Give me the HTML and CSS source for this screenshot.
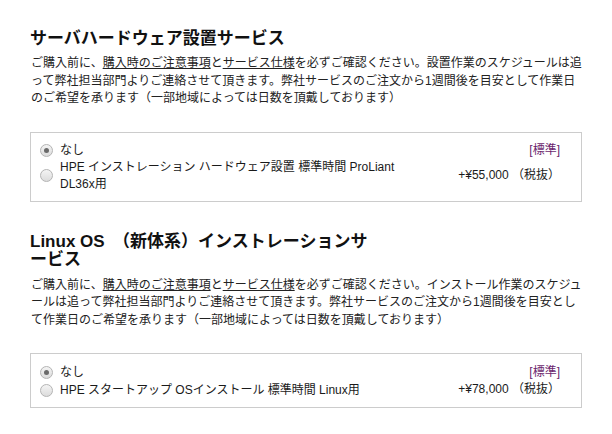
FILE: index.html
```html
<!DOCTYPE html>
<html lang="ja">
<head>
<meta charset="utf-8">
<link rel="stylesheet" href="styles.css">
</head>
<body>
<div class="page">
  <section class="service">
    <h2 class="title">サーバハードウェア設置サービス</h2>
    <p class="desc">ご購入前に、<a href="#">購入時のご注意事項</a>と<a href="#">サービス仕様</a>を必ずご確認ください。設置作業のスケジュールは追って弊社担当部門よりご連絡させて頂きます。弊社サービスのご注文から1週間後を目安として作業日のご希望を承ります（一部地域によっては日数を頂戴しております）</p>
    <div class="options">
      <div class="opt">
        <label class="lbl"><span class="radio checked"></span><span class="txt">なし</span></label>
        <span class="std">[標準]</span>
      </div>
      <div class="opt">
        <label class="lbl"><span class="radio"></span><span class="txt">HPE インストレーション ハードウェア設置 標準時間 ProLiant DL36x用</span></label>
        <span class="price">+¥55,000 （税抜）</span>
      </div>
    </div>
  </section>
  <section class="service second">
    <h2 class="title">Linux OS　（新体系）インストレーションサービス</h2>
    <p class="desc">ご購入前に、<a href="#">購入時のご注意事項</a>と<a href="#">サービス仕様</a>を必ずご確認ください。インストール作業のスケジュールは追って弊社担当部門よりご連絡させて頂きます。弊社サービスのご注文から1週間後を目安として作業日のご希望を承ります（一部地域によっては日数を頂戴しております）</p>
    <div class="options">
      <div class="opt">
        <label class="lbl"><span class="radio checked"></span><span class="txt">なし</span></label>
        <span class="std">[標準]</span>
      </div>
      <div class="opt">
        <label class="lbl"><span class="radio"></span><span class="txt">HPE スタートアップ OSインストール 標準時間 Linux用</span></label>
        <span class="price">+¥78,000 （税抜）</span>
      </div>
    </div>
  </section>
</div>
</body>
</html>
```

FILE: styles.css
```css
html, body {
  margin: 0;
  padding: 0;
  background: #ffffff;
}
body {
  font-family: "Liberation Sans", "Noto Sans CJK JP", sans-serif;
  color: #222222;
}
.page {
  width: 552px;
  padding: 30px 0 0 30px;
}
.title {
  margin: 0;
  font-size: 17px;
  line-height: 18px;
  font-weight: bold;
  color: #111111;
  max-width: 350px;
}
.desc {
  margin: 7px 0 0 1px;
  font-size: 12px;
  line-height: 17.5px;
  color: #222222;
}
.desc a {
  color: #222222;
  text-decoration: underline;
}
.options {
  margin-top: 24px;
  border: 1px solid #cccccc;
  padding: 9px 21px 8px 9px;
  font-size: 12px;
  line-height: 17px;
}
.second {
  margin-top: 31px;
}
.second .desc {
  margin-top: 8px;
}
.second .options {
  margin-top: 24px;
  padding-top: 9px;
  padding-bottom: 8px;
}
.second .opt {
  min-height: 18px;
}
.opt {
  display: flex;
  align-items: center;
  justify-content: space-between;
}
.lbl {
  display: flex;
  align-items: center;
  gap: 7px;
}
.txt {
  width: 340px;
  color: #1a1a1a;
}
.radio {
  flex: none;
  width: 11px;
  height: 11px;
  border-radius: 50%;
  border: 1px solid #b4b4b4;
  background: linear-gradient(#f4f4f4, #dcdcdc);
  display: flex;
  align-items: center;
  justify-content: center;
}
.radio.checked::after {
  content: "";
  width: 5px;
  height: 5px;
  border-radius: 50%;
  background: #6a6a6a;
}
.std {
  color: #6b1f6e;
}
.price {
  color: #1a1a1a;
  margin-top: -1px;
}
```
